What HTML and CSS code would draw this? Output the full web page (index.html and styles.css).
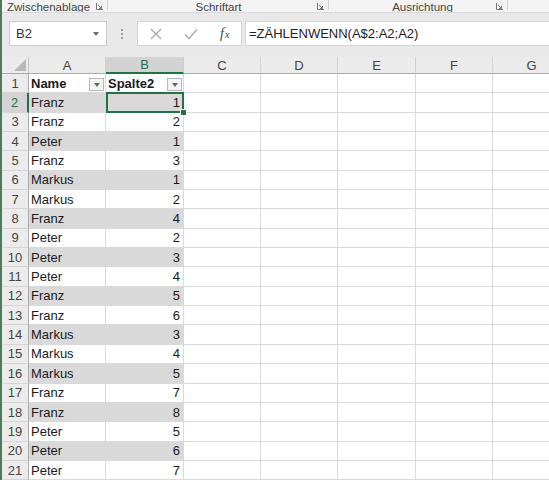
FILE: index.html
```html
<!DOCTYPE html>
<html lang="de">
<head>
    <meta charset="UTF-8">
    <title>Mappe1 - Excel</title>
    <link rel="stylesheet" href="styles.css">
</head>
<body>
    <div class="edge"></div>
    <div class="main">
        <!-- Ribbon group labels (cut off at the top) -->
        <div class="ribbon">
            <div class="group group-clip">
                <span class="label">Zwischenablage</span>
                <span class="launcher"><svg width="7" height="7" viewBox="0 0 7 7"><path d="M0.5 0v6.5H7M2 2l3.5 3.5M5.5 3v2.5H3" fill="none" stroke="#777" stroke-width="1"/></svg></span>
            </div>
            <div class="group group-font">
                <span class="label">Schriftart</span>
                <span class="launcher"><svg width="7" height="7" viewBox="0 0 7 7"><path d="M0.5 0v6.5H7M2 2l3.5 3.5M5.5 3v2.5H3" fill="none" stroke="#777" stroke-width="1"/></svg></span>
            </div>
            <div class="group group-align">
                <span class="label">Ausrichtung</span>
                <span class="launcher"><svg width="7" height="7" viewBox="0 0 7 7"><path d="M0.5 0v6.5H7M2 2l3.5 3.5M5.5 3v2.5H3" fill="none" stroke="#777" stroke-width="1"/></svg></span>
            </div>
        </div>

        <!-- Name box + formula bar -->
        <div class="fbar">
            <div class="namebox">
                <span>B2</span>
                <span class="caret"></span>
            </div>
            <div class="grip"><i></i><i></i><i></i></div>
            <div class="fbuttons">
                <svg class="fbtn" width="12" height="12" viewBox="0 0 12 12"><path d="M1 1l10 10M11 1L1 11" stroke="#a8a8a8" stroke-width="1.3"/></svg>
                <svg class="fbtn" width="14" height="12" viewBox="0 0 14 12"><path d="M1 6.5l4 4L13 1.5" fill="none" stroke="#a8a8a8" stroke-width="1.3"/></svg>
                <span class="fx"><i>f</i><small>x</small></span>
            </div>
            <div class="finput">=ZÄHLENWENN(A$2:A2;A2)</div>
        </div>

        <div class="sheet" id="sheet"></div>
    </div>

    <script>
        const sheet = document.getElementById('sheet');
        const cols = ['A', 'B', 'C', 'D', 'E', 'F', 'G'];
        const data = [
            ['Franz', 1], ['Franz', 2], ['Peter', 1], ['Franz', 3], ['Markus', 1],
            ['Markus', 2], ['Franz', 4], ['Peter', 2], ['Peter', 3], ['Peter', 4],
            ['Franz', 5], ['Franz', 6], ['Markus', 3], ['Markus', 4], ['Markus', 5],
            ['Franz', 7], ['Franz', 8], ['Peter', 5], ['Peter', 6], ['Peter', 7]
        ];

        function cell(cls, text) {
            const div = document.createElement('div');
            div.className = cls;
            if (text !== undefined) {
                const span = document.createElement('span');
                span.className = 'val';
                span.textContent = text;
                div.appendChild(span);
            }
            sheet.appendChild(div);
            return div;
        }

        function dropdown(parent) {
            const btn = document.createElement('span');
            btn.className = 'filter';
            parent.appendChild(btn);
        }

        // header row
        cell('corner');
        cols.forEach(c => cell(c === 'B' ? 'ch sel' : 'ch', c));

        // row 1: table header
        cell('rh', 1);
        dropdown(cell('cell th', 'Name'));
        dropdown(cell('cell th', 'Spalte2'));
        for (let i = 2; i < cols.length; i++) cell('cell');

        // rows 2..21
        data.forEach((row, i) => {
            const n = i + 2;
            const band = n % 2 === 0 ? ' band' : '';
            cell(n === 2 ? 'rh sel' : 'rh', n);
            cell('cell' + band, row[0]);
            cell('cell num' + band + (n === 2 ? ' active' : ''), row[1]);
            for (let j = 2; j < cols.length; j++) cell('cell');
        });
    </script>
</body>
</html>
```

FILE: styles.css
```css
body {
    margin: 0;
    width: 549px;
    height: 480px;
    overflow: hidden;
    display: flex;
    background: #ffffff;
    font-family: "Liberation Sans", Arial, sans-serif;
    color: #222;
}

.edge {
    flex: none;
    width: 2px;
    background: #4f7a5d;
}

.main {
    flex: 1;
    min-width: 0;
    display: flex;
    flex-direction: column;
    overflow: hidden;
}

/* Ribbon labels */
.ribbon {
    flex: none;
    height: 12px;
    display: flex;
    background: #f3f3f3;
    border-bottom: 1px solid #d9d9d9;
    overflow: hidden;
}

.group {
    display: flex;
    align-items: flex-end;
    border-right: 1px solid #d2d2d2;
    box-sizing: border-box;
    height: 10px;
}

.group-clip {
    width: 106px;
}

.group-font {
    width: 221px;
}

.group-align {
    width: 179px;
}

.label {
    flex: 1;
    font-size: 11.5px;
    line-height: 11px;
    margin-bottom: -3px;
    color: #444;
    text-align: center;
    white-space: nowrap;
}

.group-clip .label {
    text-align: left;
    padding-left: 5px;
}

.group-font .label {
    padding-left: 12px;
}

.group-align .label {
    padding-left: 20px;
}

.launcher {
    flex: none;
    width: 7px;
    height: 7px;
    margin: 0 4px 0 0;
    display: flex;
}

/* Formula bar */
.fbar {
    flex: none;
    height: 44px;
    box-sizing: border-box;
    padding: 8px 0 0 7px;
    display: flex;
    align-items: flex-start;
    background: #e9e9e9;
}

.namebox {
    width: 98px;
    height: 25px;
    box-sizing: border-box;
    background: #fff;
    border: 1px solid #c9c9c9;
    display: flex;
    align-items: center;
    padding: 0 7px 0 6px;
    font-size: 13px;
    color: #333;
}

.namebox span:first-child {
    flex: 1;
}

.caret {
    width: 0;
    height: 0;
    border-left: 3.5px solid transparent;
    border-right: 3.5px solid transparent;
    border-top: 4px solid #6a6a6a;
}

.grip {
    width: 30px;
    height: 25px;
    display: flex;
    flex-direction: column;
    align-items: center;
    justify-content: center;
    gap: 2px;
}

.grip i {
    width: 2px;
    height: 2px;
    background: #a0a0a0;
}

.fbuttons {
    width: 105px;
    height: 25px;
    box-sizing: border-box;
    background: #fff;
    border: 1px solid #d4d4d4;
    display: flex;
    align-items: center;
    padding-left: 12px;
}

.fbuttons .fbtn:first-child {
    margin-right: 22px;
}

.fx {
    margin-left: 22px;
    font-family: "Liberation Serif", serif;
    color: #444;
    font-size: 14px;
}

.fx small {
    font-style: italic;
    font-size: 10px;
    margin-left: 1px;
}

.finput {
    flex: 1;
    height: 25px;
    margin-left: 3px;
    box-sizing: border-box;
    background: #fff;
    border: 1px solid #d4d4d4;
    border-right: none;
    padding-left: 3px;
    font-size: 13px;
    line-height: 23px;
    color: #222;
    white-space: nowrap;
}

/* Worksheet grid */
.sheet {
    flex: none;
    display: grid;
    grid-template-columns: 27px 77px 78px 77px 77px 78px 77px 78px;
    grid-template-rows: 17px;
    grid-auto-rows: 19.35px;
    font-size: 13px;
}

.corner,
.ch,
.rh,
.cell {
    box-sizing: border-box;
    overflow: hidden;
    white-space: nowrap;
}

.corner {
    background: #ebebeb;
    border-right: 1px solid #c6c6c6;
    border-bottom: 1px solid #ababab;
    display: flex;
    justify-content: flex-end;
    align-items: flex-end;
    padding: 0 2px 2px 0;
}

.corner::after {
    content: "";
    width: 0;
    height: 0;
    border-left: 12px solid transparent;
    border-bottom: 12px solid #b9b9b9;
}

.ch {
    background: #ebebeb;
    border-right: 1px solid #cfcfcf;
    border-bottom: 1px solid #ababab;
    display: flex;
    align-items: center;
    justify-content: center;
    color: #444;
}

.ch.sel {
    background: #d3d3d3;
    color: #217346;
    border-bottom: 2px solid #217346;
}

.rh {
    background: #ebebeb;
    border-right: 1px solid #ababab;
    border-bottom: 1px solid #d4d4d4;
    display: flex;
    align-items: center;
    justify-content: center;
    color: #444;
}

.rh.sel {
    background: #d3d3d3;
    color: #217346;
    border-right: 2px solid #217346;
}

.cell {
    background: #fff;
    border-right: 1px solid #dadada;
    border-bottom: 1px solid #dadada;
    display: flex;
    align-items: center;
    padding: 0 2px;
    color: #1a1a1a;
}

.cell.band {
    background: #d9d9d9;
    border-color: #d9d9d9;
}

.cell.num {
    justify-content: flex-end;
    padding-right: 3px;
}

.cell.th {
    font-weight: bold;
    padding-right: 1px;
    align-items: flex-end;
}

.cell.th .val {
    flex: 1;
    align-self: center;
}

.filter {
    flex: none;
    width: 15px;
    height: 13px;
    margin-bottom: 1px;
    box-sizing: border-box;
    background: #f4f4f4;
    border: 1px solid #b8b8b8;
    display: flex;
    align-items: center;
    justify-content: center;
}

.filter::after {
    content: "";
    width: 0;
    height: 0;
    border-left: 3.5px solid transparent;
    border-right: 3.5px solid transparent;
    border-top: 4px solid #666;
}

/* active cell B2 */
.cell.active {
    position: relative;
    overflow: visible;
}

.cell.active::after {
    content: "";
    position: absolute;
    top: -1px;
    left: 0;
    right: -1px;
    bottom: -1px;
    border: 2px solid #217346;
    z-index: 1;
}

.cell.active::before {
    content: "";
    position: absolute;
    right: -4px;
    bottom: -4px;
    width: 5px;
    height: 5px;
    background: #217346;
    border: 1px solid #fff;
    z-index: 2;
}
```
